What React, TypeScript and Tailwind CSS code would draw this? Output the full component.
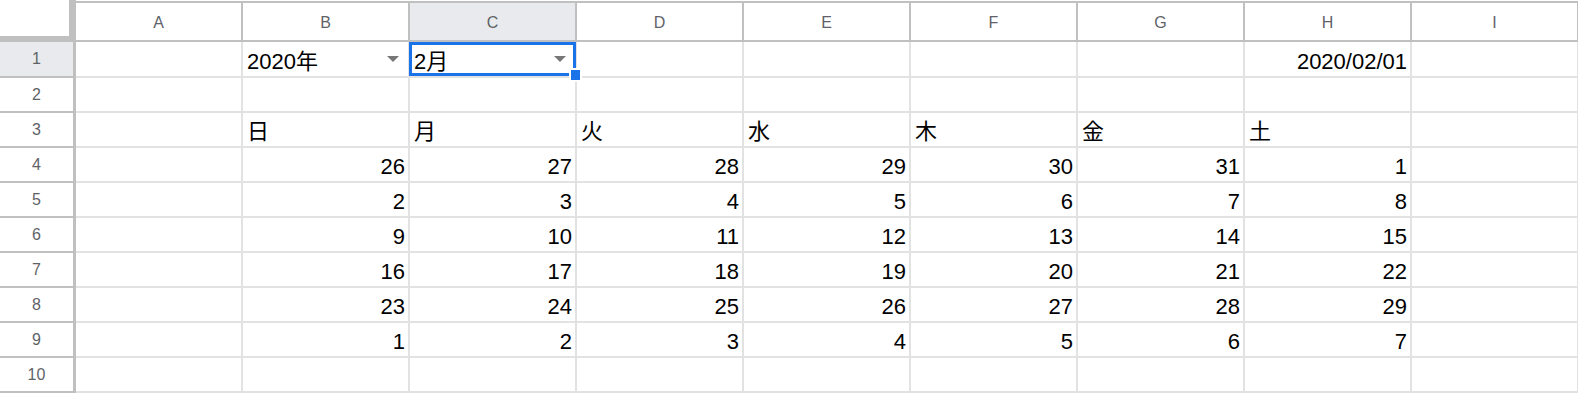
import { ReactNode } from "react";

const COLS = ["A", "B", "C", "D", "E", "F", "G", "H", "I"];

const FONT = { fontFamily: '"Liberation Sans", Arial, "Noto Sans CJK JP", sans-serif' };

type Cell = { text?: string; align?: "left" | "right"; dropdown?: boolean };

const weeks = [
  [26, 27, 28, 29, 30, 31, 1],
  [2, 3, 4, 5, 6, 7, 8],
  [9, 10, 11, 12, 13, 14, 15],
  [16, 17, 18, 19, 20, 21, 22],
  [23, 24, 25, 26, 27, 28, 29],
  [1, 2, 3, 4, 5, 6, 7],
];

// 10 rows x 9 columns (A..I)
function buildRows(): Cell[][] {
  const empty = () => Array.from({ length: 9 }, () => ({}) as Cell);
  const rows: Cell[][] = [];

  const r1 = empty();
  r1[1] = { text: "2020年", dropdown: true };
  r1[2] = { text: "2月", dropdown: true };
  r1[7] = { text: "2020/02/01", align: "right" };
  rows.push(r1);

  rows.push(empty());

  const r3 = empty();
  ["日", "月", "火", "水", "木", "金", "土"].forEach((d, i) => (r3[i + 1] = { text: d }));
  rows.push(r3);

  weeks.forEach((w) => {
    const r = empty();
    w.forEach((n, i) => (r[i + 1] = { text: String(n), align: "right" }));
    rows.push(r);
  });

  rows.push(empty());
  return rows;
}

function Arrow() {
  return (
    <svg width="12" height="6" viewBox="0 0 12 6" className="shrink-0">
      <polygon points="0,0 12,0 6,6" fill="#777" />
    </svg>
  );
}

function DataCell({ cell, first }: { cell: Cell; first: boolean }): ReactNode {
  return (
    <div
      className={`w-[167px] shrink-0 border-r-2 border-b-2 border-[#e2e2e2] flex items-end pb-[2px] ${
        first ? "h-[36px]" : "h-[35px]"
      } ${cell.align === "right" ? "justify-end pr-[3px]" : "pl-[4px]"}`}
    >
      {cell.text && <span className="text-[22px] leading-[25px] text-black whitespace-nowrap">{cell.text}</span>}
      {cell.dropdown && (
        <div className="ml-auto mr-[9px] self-center mt-[2px]">
          <Arrow />
        </div>
      )}
    </div>
  );
}

export default function App() {
  const rows = buildRows();

  return (
    <div className="relative w-[1578px] h-[393px] overflow-hidden bg-white" style={FONT}>
      {/* column headers */}
      <div className="flex h-[42px]">
        <div className="w-[76px] h-[42px] shrink-0 border-r-[7px] border-b-[6px] border-[#c0c0c0] bg-white" />
        {COLS.map((c) => (
          <div key={c} className="w-[167px] shrink-0 h-[42px] pt-px">
            <div
              className={`h-full border-t-2 border-b-2 border-r-2 border-[#c0c0c0] flex items-center justify-center text-[16px] text-[#5f6368] pt-[2px] ${
                c === "C" ? "bg-[#e8eaed]" : "bg-white"
              }`}
            >
              {c}
            </div>
          </div>
        ))}
      </div>

      {/* rows */}
      {rows.map((row, ri) => (
        <div key={ri} className="flex">
          <div
            className={`w-[76px] shrink-0 border-r-[3px] border-b-2 border-[#c0c0c0] flex items-center justify-center text-[16px] text-[#5f6368] ${
              ri === 0 ? "h-[36px] bg-[#e8eaed]" : "h-[35px] bg-white"
            }`}
          >
            {ri + 1}
          </div>
          {row.map((cell, ci) => (
            <DataCell key={ci} cell={cell} first={ri === 0} />
          ))}
        </div>
      ))}

      {/* selection on C1 */}
      <div className="absolute left-[409px] top-[42px] w-[167px] h-[34px] border-[3px] border-[#1a73e8] pointer-events-none" />
      <div className="absolute left-[569px] top-[68px] w-[13px] h-[14px] border-2 border-white bg-[#1a73e8]" />
    </div>
  );
}
